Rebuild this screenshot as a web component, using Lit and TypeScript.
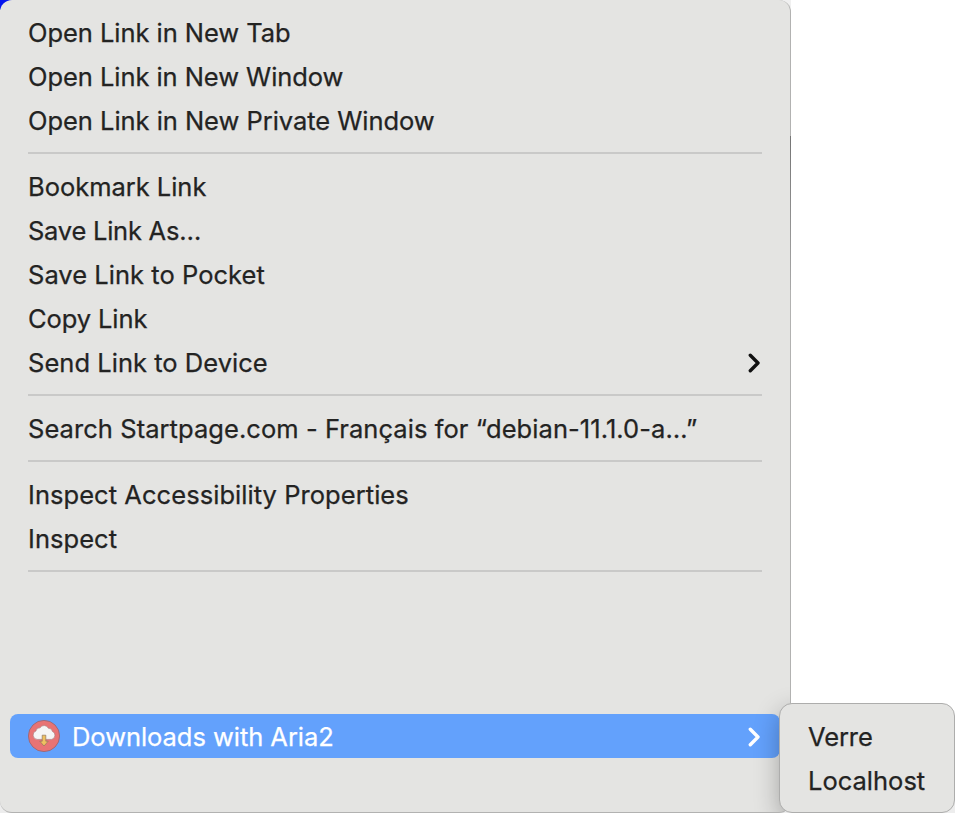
import { LitElement, html, css, svg, nothing } from "lit";
import { customElement, property } from "lit/decorators.js";
import { classMap } from "lit/directives/class-map.js";
import { styleMap } from "lit/directives/style-map.js";

interface Entry {
  label: string;
  tracking?: number;
  submenu?: boolean;
}

const groups: Entry[][] = [
  [
    { label: "Open Link in New Tab", tracking: -0.05 },
    { label: "Open Link in New Window", tracking: -0.06 },
    { label: "Open Link in New Private Window", tracking: -0.04 },
  ],
  [
    { label: "Bookmark Link", tracking: -0.03 },
    { label: "Save Link As…", tracking: -0.24 },
    { label: "Save Link to Pocket", tracking: 0.03 },
    { label: "Copy Link", tracking: -0.1 },
    { label: "Send Link to Device", tracking: 0.03, submenu: true },
  ],
  [{ label: "Search Startpage.com - Français for “debian-11.1.0-a…”", tracking: 0.06 }],
  [
    { label: "Inspect Accessibility Properties", tracking: 0.05 },
    { label: "Inspect", tracking: 0.05 },
  ],
];

const chevron = svg`<path d="M2.3 2.3 L10 10 L2.3 17.7" fill="none" stroke="currentColor"
  stroke-width="3.4" stroke-linecap="round" stroke-linejoin="round"/>`;

@customElement("menu-row")
export class MenuRow extends LitElement {
  @property() label = "";
  @property({ type: Number }) tracking = 0;
  @property({ type: Boolean }) submenu = false;
  @property({ type: Boolean }) active = false;

  static styles = css`
    :host { display: block; }
    .row {
      display: flex;
      align-items: center;
      box-sizing: border-box;
      height: 44px;
      padding: 0 18px;
      border-radius: 8px;
      color: #232322;
    }
    .active { background: #63a1fc; color: #fff; }
    .label { flex: 1; white-space: pre; line-height: 44px; -webkit-text-stroke: 0.25px currentColor; }
    .chevron { width: 14px; height: 20px; color: #111; }
    .active .chevron { color: #fff; margin-top: 2px; }
    .active .label { line-height: 42px; padding-top: 2px; }
    ::slotted(svg) { display: block; margin-right: 12px; }
  `;

  render() {
    return html`<div class=${classMap({ row: true, active: this.active })}>
      <slot></slot>
      <span class="label" style=${styleMap({ letterSpacing: `${this.tracking}px` })}>${this.label}</span>
      ${this.submenu ? html`<svg class="chevron" viewBox="0 0 14 20">${chevron}</svg>` : nothing}
    </div>`;
  }
}

@customElement("app-root")
export class AppRoot extends LitElement {
  static styles = css`
    :host {
      display: block;
      position: relative;
      width: 955px;
      height: 813px;
      overflow: hidden;
      background: #fff;
      font-family: Inter, "Noto Sans", sans-serif;
      font-size: 25.5px;
    }
    .page-link { position: absolute; left: 0; top: 0; width: 12px; height: 10px; background: #0414ee; }
    .page-top { position: absolute; left: 770px; top: 0; width: 21px; height: 10px; background: #f0f0f0; }
    .page-foot { position: absolute; left: 0; bottom: 0; width: 955px; height: 12px; background: #ededed; }
    .menu {
      position: relative;
      box-sizing: border-box;
      width: 791px;
      height: 813px;
      padding: 11px 10px 0 10px;
      border: solid #b2b2b1;
      border-width: 0 1px 1px 0;
      border-radius: 12px;
      background: #e4e4e2;
      overflow: hidden;
    }
    .separator { height: 2px; margin: 9px 18px 11px; background: #c9c9c8; }
    .spacer { height: 131px; }
    .edge { position: absolute; left: 790px; top: 136px; width: 1px; height: 154px; background: linear-gradient(#757575, #a8a8a8); }
    .cast { position: absolute; left: 780px; top: 704px; width: 174px; height: 108px; border-radius: 12px; box-shadow: 0 8px 26px rgba(0, 0, 0, 0.3); }
    .submenu {
      position: absolute;
      left: 779px;
      top: 703px;
      box-sizing: border-box;
      width: 176px;
      height: 110px;
      padding: 11px 10px;
      border: 1px solid #adadac;
      border-radius: 13px;
      background: #e4e4e2;
    }
  `;

  render() {
    return html`
      <div class="page-link"></div>
      <div class="page-top"></div>
      <div class="page-foot"></div>
      <div class="menu">
        ${groups.map(
          (group) => html`
            ${group.map(
              (e) => html`<menu-row .label=${e.label} .tracking=${e.tracking ?? 0} .submenu=${!!e.submenu}></menu-row>`
            )}
            <div class="separator"></div>
          `
        )}
        <div class="spacer"></div>
        <div class="cast"></div>
        <menu-row .label=${"Downloads with Aria2"} .tracking=${-0.05} .submenu=${true} .active=${true}>
          <svg width="32" height="32" viewBox="0 0 32 32">
            <circle cx="16" cy="16" r="15.6" fill="#e87374" stroke="#98636e" stroke-width="0.8" />
            <path
              d="M9.2 19.4 A4.4 4.4 0 0 1 8 10.9 A3.8 3.8 0 0 1 12 7.8 A4.8 4.8 0 0 1 20.4 8.3 A3.8 3.8 0 0 1 24.4 11.4 A4.2 4.2 0 0 1 23.4 19.4 Z"
              fill="#f6f5f5" stroke="#a57779" stroke-width="0.6" stroke-linejoin="round"
            />
            <path
              d="M14.2 15.2 H17.8 V21.2 H20.2 L16 26 L11.8 21.2 H14.2 Z"
              fill="#efc160" stroke="#92765b" stroke-width="0.7" stroke-linejoin="round"
            />
          </svg>
        </menu-row>
      </div>
      <div class="edge"></div>
      <div class="submenu">
        <menu-row .label=${"Verre"} .tracking=${-0.1}></menu-row>
        <menu-row .label=${"Localhost"}></menu-row>
      </div>
    `;
  }
}
